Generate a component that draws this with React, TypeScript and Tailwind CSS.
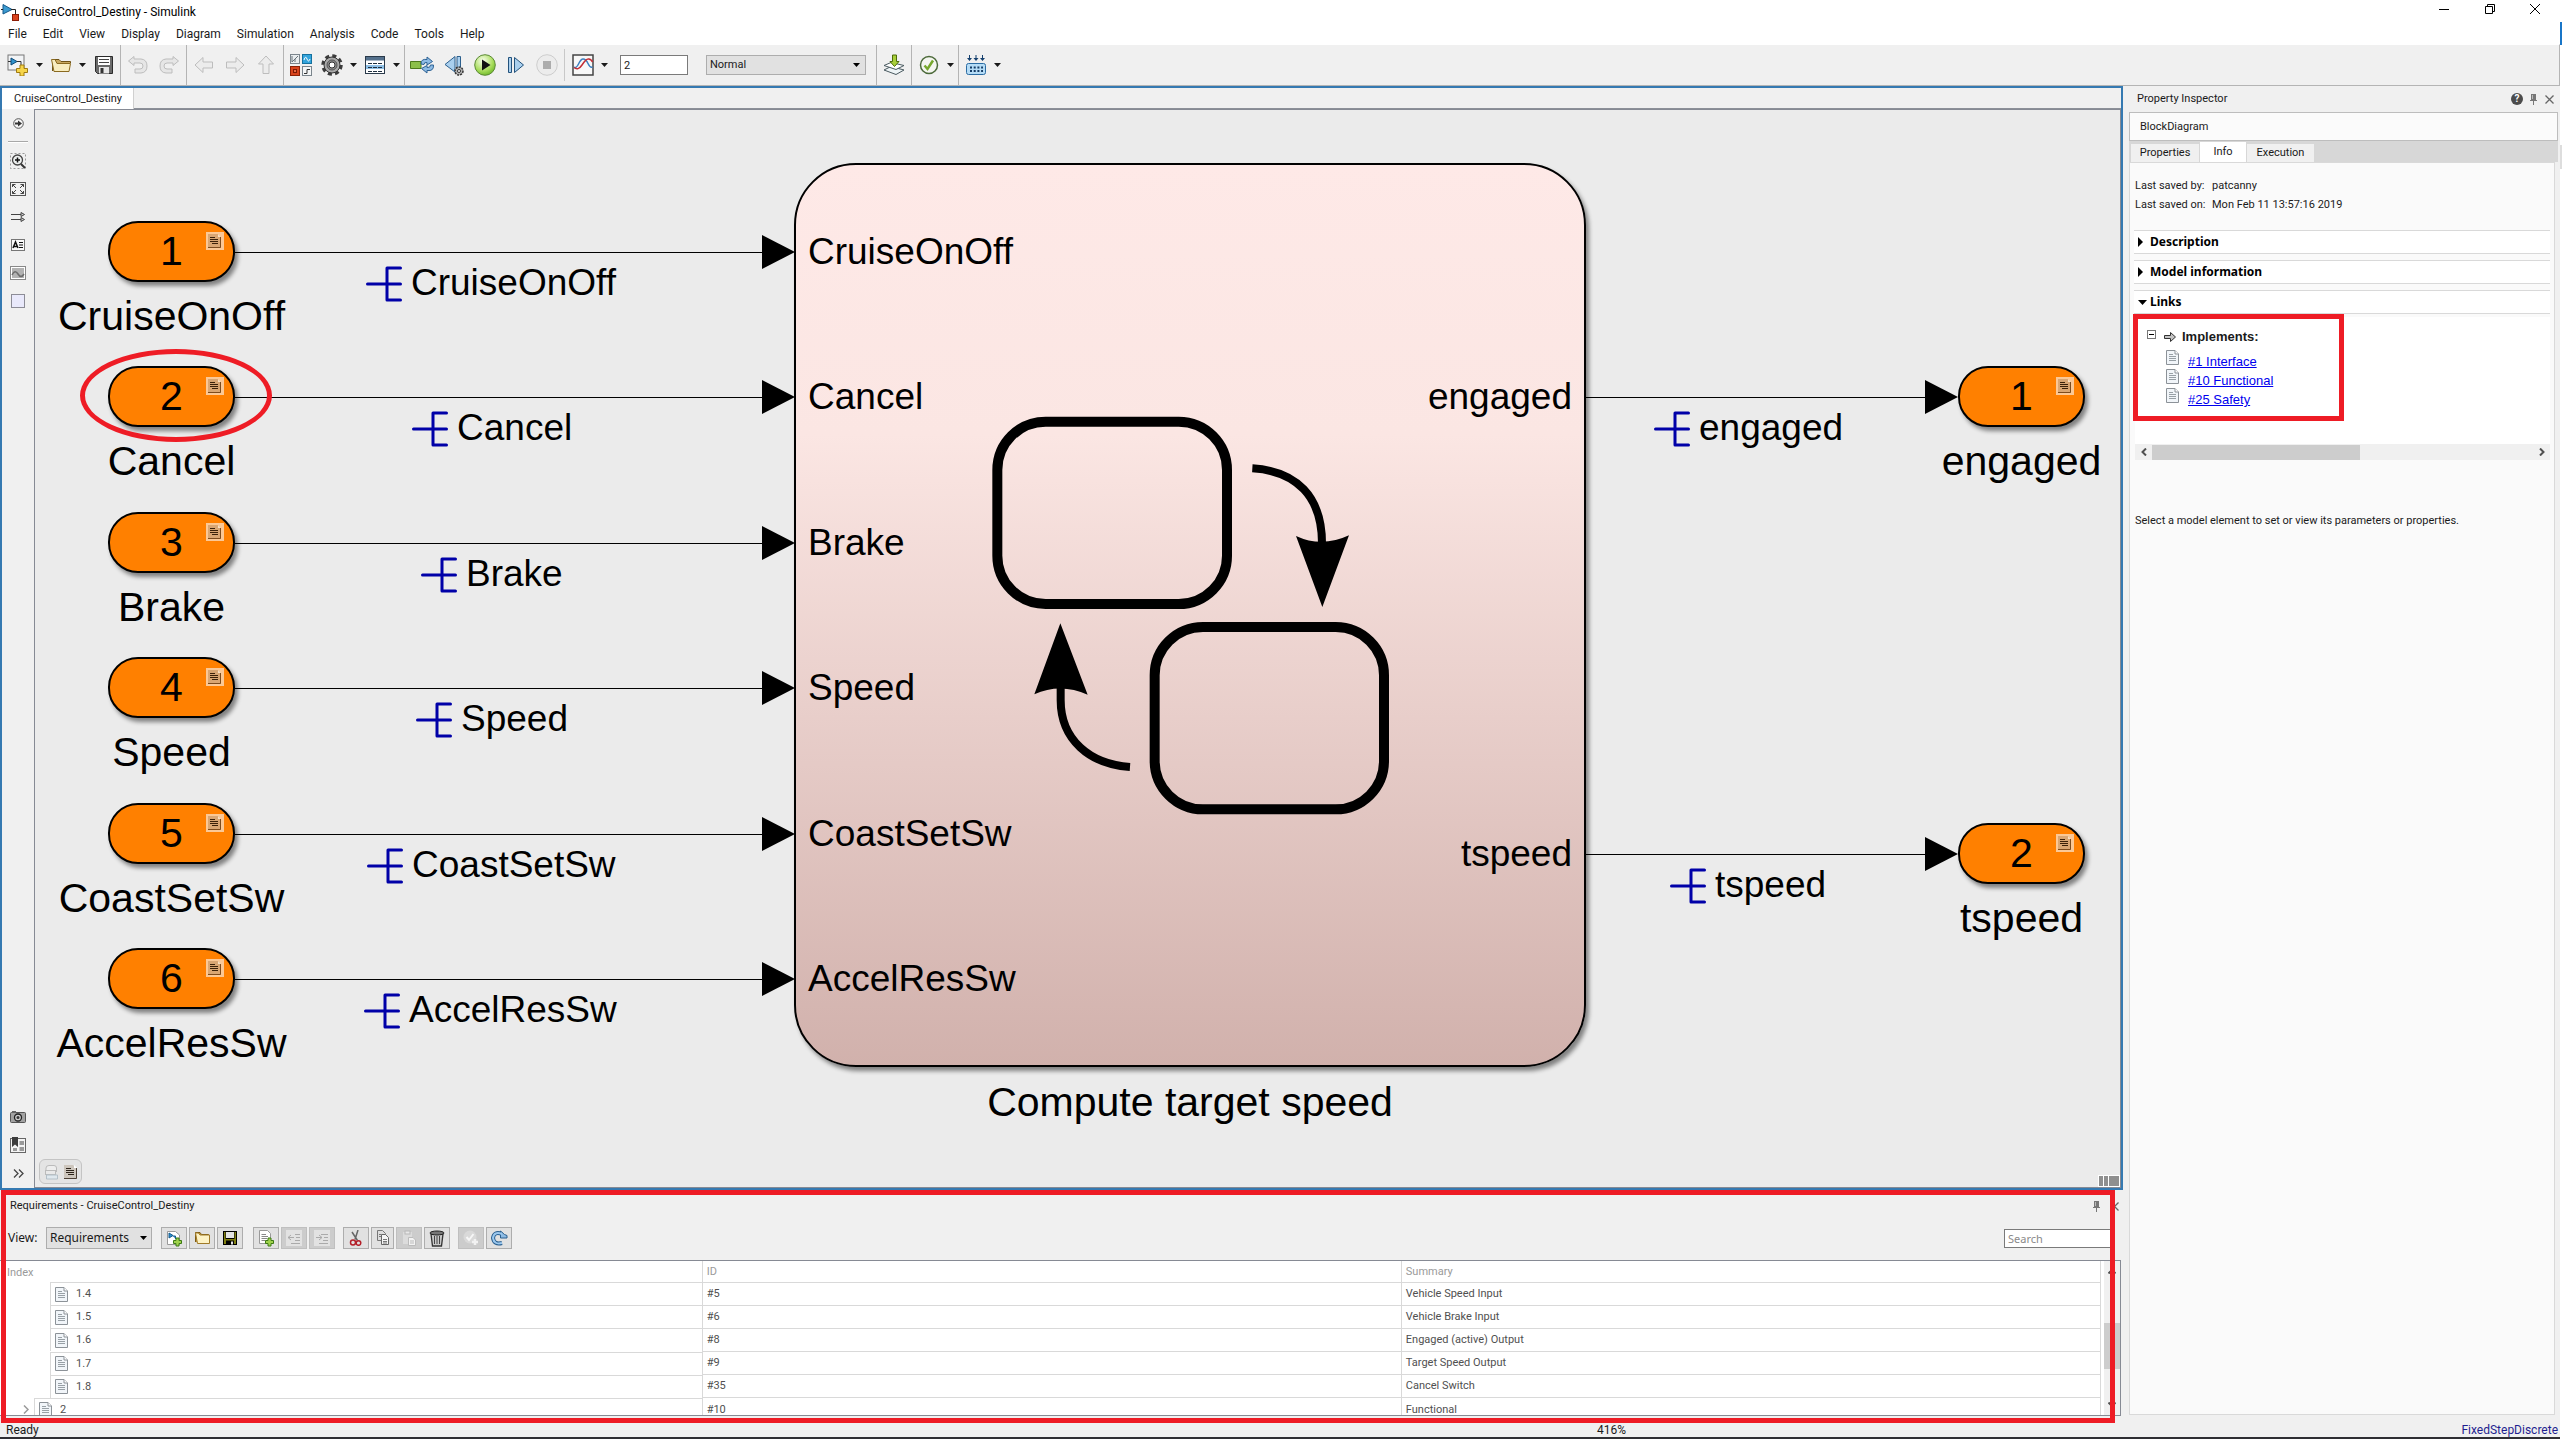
import type { ReactNode } from 'react';

/* ---------- shared icons ---------- */

function Svg({ w = 22, h = 22, box, children }: { w?: number; h?: number; box?: string; children: ReactNode }) {
  return (
    <svg width={w} height={h} viewBox={box ?? `0 0 ${w} ${h}`} className="block shrink-0" aria-hidden="true">
      {children}
    </svg>
  );
}

const Caret = ({ label }: { label: string }) => (
  <button aria-label={label} className="flex h-6 w-[7px] shrink-0 items-center">
    <Svg w={7} h={4}>
      <path d="M0 0H7L3.5 4Z" fill="#1a1a1a" />
    </Svg>
  </button>
);

const Tool = ({ label, children }: { label: string; children: ReactNode }) => (
  <button aria-label={label} className="flex shrink-0 items-center justify-center">
    {children}
  </button>
);

const Group = ({ children }: { children: ReactNode }) => (
  <div className="flex h-full items-center border-r border-[#b4b4b4]">{children}</div>
);

const AppIcon = () => (
  <Svg w={18} h={18}>
    <path d="M2 1.500V11L11 6.500Z" fill="#3b9ad0" stroke="#16598a" />
    <path d="M0 6.500H2M10 6.500H14.500V11" fill="none" stroke="#222" />
    <rect x="11.500" y="11.500" width="6" height="6" fill="#d9431e" stroke="#8c1d06" />
  </Svg>
);

const NewIcon = () => (
  <Svg>
    <rect x="1" y="1" width="16" height="15" fill="#f2f4f6" stroke="#777" />
    <path d="M1 7.500H4" stroke="#333" />
    <path d="M4 4V11L10 7.500Z" fill="#2f93cc" stroke="#0f4a78" />
    <path d="M10 7.500H14V12" fill="none" stroke="#333" />
    <path d="M13 11h4v3.500h3.500v4H17V22h-4v-3.500H9.500v-4H13Z" fill="#f6d54a" stroke="#a07a10" />
  </Svg>
);

const FolderIcon = () => (
  <Svg>
    <path d="M2.500 17V5.500H9L11 7.500H20.500V9" fill="#c9a961" stroke="#6f5316" />
    <path d="M1.500 5.500L4 17.500H19L20.500 9.500H7L5 5.500Z" fill="#f8edc0" stroke="#8a6a20" />
  </Svg>
);

const SaveIcon = () => (
  <Svg>
    <path d="M2.500 2.500H19.500V19.500H4.500L2.500 17.500Z" fill="#6a6a6a" stroke="#2b2b2b" />
    <rect x="5" y="3" width="12" height="8" fill="#fff" />
    <path d="M6 5.500H16M6 8.500H16" stroke="#444" />
    <rect x="6" y="13" width="10" height="6.500" fill="#e8e8e8" />
    <rect x="7.500" y="14" width="3" height="5" fill="#333" />
  </Svg>
);

const UNDO = 'M7 2.500L1.500 7L7 11.500V9H13Q16 9 16 12T13 15H8V19H14Q20 18.500 20 12T14 5H7Z';
const UndoIcon = () => (
  <Svg>
    <path d={UNDO} fill="#e6e6e6" stroke="#bdbdbd" />
  </Svg>
);
const RedoIcon = () => (
  <Svg>
    <path d={UNDO} transform="matrix(-1 0 0 1 22 0)" fill="#e6e6e6" stroke="#bdbdbd" />
  </Svg>
);

const ARROW = 'M2 11L10 3.500V8H19.500V14H10V18.500Z';
const ArrowIcon = ({ turn }: { turn: number }) => (
  <Svg>
    <path d={ARROW} transform={`rotate(${turn} 11 11)`} fill="#ececec" stroke="#bdbdbd" />
  </Svg>
);

const LibraryIcon = () => (
  <Svg>
    <rect x=".5" y=".5" width="9" height="9" fill="#e8ecee" stroke="#7b858c" />
    <path d="M2 8V2M2 8L8 2M5 8V5" stroke="#68737a" fill="none" />
    <rect x="12.500" y=".5" width="9" height="9" fill="#33a4dc" stroke="#14719f" />
    <path d="M14 6Q15.500 1 17 5T20 5" stroke="#fff" fill="none" />
    <rect x=".5" y="12.500" width="9" height="9" fill="#d8431c" stroke="#8c2106" />
    <rect x="3.500" y="15.500" width="3" height="3" fill="#e86a45" stroke="#7a1a04" />
    <rect x="12.500" y="12.500" width="9" height="9" fill="#f4f6f7" stroke="#7b858c" />
    <path d="M14 19.500H17V15.500H20" stroke="#333" fill="none" />
  </Svg>
);

const Gear = ({ s = 22 }: { s?: number }) => (
  <Svg w={s} h={s} box="0 0 22 22">
    <circle cx="11" cy="11" r="9" fill="none" stroke="#3c3c3c" strokeWidth="3.500" strokeDasharray="4 3.070" />
    <circle cx="11" cy="11" r="8" fill="#a9a9a9" stroke="#333" />
    <circle cx="11" cy="11" r="5" fill="#8a8a8a" stroke="#555" />
    <circle cx="11" cy="11" r="3" fill="#fff" stroke="#333" />
  </Svg>
);

const ExplorerIcon = () => (
  <Svg>
    <rect x="1.500" y="2.500" width="19" height="17" fill="#fff" stroke="#2a3a4a" />
    <rect x="2" y="3" width="18" height="3.500" fill="#54708c" />
    <rect x="2" y="11" width="18" height="4" fill="#8fc0e6" />
    <path d="M4 9.500h4m1 0h4m1 0h4M4 13.500h4m1 0h4m1 0h4M4 17.500h4m1 0h4m1 0h4" stroke="#1f2f3f" />
  </Svg>
);

const FastRestartIcon = () => (
  <Svg w={24} h={22}>
    <path d="M.5 7.500H11V14.500H.5Z" fill="#8cc04a" stroke="#4d7a1d" />
    <path d="M11 10Q11 4.500 17 5.500L17 3L22.500 7.500L17 11V8.500Q14 8 14 10.500Z" fill="#8dbbe4" stroke="#2d6294" />
    <path d="M23.500 11Q24 17.500 17 16.500V19L11.500 14.500L17 11.500V13.500Q20.500 14 20.500 11Z" fill="#8dbbe4" stroke="#2d6294" />
  </Svg>
);

const StepBackIcon = () => (
  <Svg>
    <path d="M12 2.500V18L2 10.500Z" fill="#a9cfee" stroke="#2c5f8d" />
    <path d="M14 2.500H17.500V16H14Z" fill="#a9cfee" stroke="#2c5f8d" />
    <circle cx="16" cy="17" r="4" fill="#b0b0b0" stroke="#333" strokeWidth="1.500" strokeDasharray="2 1" />
    <circle cx="16" cy="17" r="1.500" fill="#fff" stroke="#333" />
  </Svg>
);

const RunIcon = () => (
  <Svg>
    <defs>
      <radialGradient id="run" cx=".4" cy=".3" r=".8">
        <stop offset="0" stopColor="#fbfff0" />
        <stop offset=".6" stopColor="#a8dd5c" />
        <stop offset="1" stopColor="#5fae1c" />
      </radialGradient>
    </defs>
    <circle cx="11" cy="11" r="10.300" fill="url(#run)" stroke="#5c8a36" />
    <path d="M8 5.500V16.500L16.500 11Z" fill="#111" />
  </Svg>
);

const StepForwardIcon = () => (
  <Svg>
    <path d="M3.500 3.500H6.500V18.500H3.500Z" fill="#a9cfee" stroke="#23527c" />
    <path d="M9.500 3.500V18.500L18.500 11Z" fill="#a9cfee" stroke="#23527c" />
  </Svg>
);

const StopIcon = () => (
  <Svg>
    <circle cx="11" cy="11" r="10.300" fill="#ececec" stroke="#cdcdcd" />
    <rect x="7" y="7" width="8" height="8" fill="#acacac" />
  </Svg>
);

const ScopeIcon = () => (
  <Svg>
    <rect x="1" y="1" width="20" height="20" fill="#f8f8f8" stroke="#444" strokeWidth="1.500" />
    <path d="M2 13Q4 15 6.500 10T11 5Q14 5 16 9.500T20.500 13" fill="none" stroke="#3b7fc0" strokeWidth="1.500" />
    <path d="M2 13.500Q6 17 10 11T16 5Q19 4.500 20.500 8" fill="none" stroke="#c22d35" strokeWidth="1.500" />
  </Svg>
);

const BuildIcon = () => (
  <Svg>
    <path d="M1 16L8 12.500L21 16L13 20.500Z" fill="#eef4f6" stroke="#4a5a60" />
    <path d="M1 11.500L8 8.500L21 11.500L13 15.500Z" fill="#fff" stroke="#4a5a60" />
    <path d="M9.500 1H13.500V7.500H16L11.500 12.500L7 7.500H9.500Z" fill="#a9cf3a" stroke="#4d6d08" />
  </Svg>
);

const CheckIcon = () => (
  <Svg>
    <circle cx="11" cy="11" r="8.500" fill="#f4f6f0" stroke="#4c6a3a" strokeWidth="1.500" />
    <path d="M6.500 11.500L9.500 15L15 6.500" fill="none" stroke="#76a82c" strokeWidth="2.500" />
  </Svg>
);

const DeployIcon = () => (
  <Svg>
    <path d="M4.500 1V5M11 1V5M17.500 1V5" stroke="#15406e" />
    <path d="M2 4h5L4.500 7ZM8.500 4h5L11 7ZM15 4h5L17.500 7Z" fill="#15406e" />
    <rect x="1.500" y="9.500" width="19" height="11" rx="2" fill="#b5dcf6" stroke="#2b6ca3" />
    <path d="M5 13.500H18M5 17H18" stroke="#143c66" strokeWidth="2" strokeDasharray="2 1.700" />
  </Svg>
);

const PageIcon = () => (
  <Svg w={13} h={15}>
    <path d="M.5 .5H9L12.500 4V14.500H.5Z" fill="#f1f5f9" stroke="#8c9298" />
    <path d="M9 .5V4H12.500" fill="#fff" stroke="#8c9298" />
    <path d="M3 4.500H7M3 6.500H10M3 8.500H10M3 10.500H10" stroke="#98a0a6" />
  </Svg>
);

const PinIcon = () => (
  <Svg w={7} h={11}>
    <rect x="1" y="0" width="5" height="6" fill="#777" />
    <rect x="2" y="1" width="1" height="4" fill="#bbb" />
    <path d="M0 6.500H7M3.500 7V11" stroke="#777" />
  </Svg>
);

const CloseSmall = () => (
  <Svg w={9} h={9}>
    <path d="M.5 .5L8.500 8.500M8.500 .5L.5 8.500" stroke="#666" strokeWidth="1.300" />
  </Svg>
);

/* ---------- model toolbar ---------- */

function Toolbar() {
  return (
    <div role="toolbar" className="flex h-[42px] shrink-0 items-center border-t border-b border-r border-t-white border-b-[#b4b4b4] border-r-[#b4b4b4] bg-[#f0f0f0]">
      <Group>
        <div className="flex items-center gap-[7px] pr-[5px] pl-[7px]">
          <Tool label="New model"><NewIcon /></Tool>
          <Caret label="New options" />
          <Tool label="Open"><FolderIcon /></Tool>
          <Caret label="Open options" />
          <Tool label="Save"><SaveIcon /></Tool>
        </div>
      </Group>
      <Group>
        <div className="flex items-center gap-[9px] px-1.5">
          <Tool label="Undo"><UndoIcon /></Tool>
          <Tool label="Redo"><RedoIcon /></Tool>
        </div>
      </Group>
      <Group>
        <div className="flex items-center gap-[9px] px-1.5">
          <Tool label="Back"><ArrowIcon turn={0} /></Tool>
          <Tool label="Forward"><ArrowIcon turn={180} /></Tool>
          <Tool label="Up to parent"><ArrowIcon turn={90} /></Tool>
        </div>
      </Group>
      <Group>
        <div className="flex items-center gap-[7px] pr-1 pl-1.5">
          <Tool label="Library browser"><LibraryIcon /></Tool>
          <div className="ml-0.5"><Tool label="Model configuration"><Gear /></Tool></div>
          <Caret label="Configuration options" />
          <Tool label="Model explorer"><ExplorerIcon /></Tool>
          <Caret label="Explorer options" />
        </div>
      </Group>
      <Group>
        <div className="flex items-center gap-[9px] pr-1.5 pl-[5px]">
          <Tool label="Fast restart"><FastRestartIcon /></Tool>
          <Tool label="Step back"><StepBackIcon /></Tool>
          <Tool label="Run"><RunIcon /></Tool>
          <Tool label="Step forward"><StepForwardIcon /></Tool>
          <Tool label="Stop"><StopIcon /></Tool>
        </div>
        <div className="mr-[7px] h-8 w-px bg-[#c8c8c8]" />
        <div className="flex items-center gap-[7px]">
          <Tool label="Simulation data inspector"><ScopeIcon /></Tool>
          <Caret label="Data inspector options" />
        </div>
        <input aria-label="Stop time" defaultValue="2" className="ml-3 h-5 w-[68px] border border-[#7a7a7a] bg-white px-[3px] text-[11px]" />
        <div className="relative mr-[10px] ml-[18px]">
          <select aria-label="Simulation mode" className="block h-5 w-[160px] appearance-none border border-[#adadad] bg-[#e1e1e1] px-[3px] text-[11px]">
            <option>Normal</option>
          </select>
          <div className="pointer-events-none absolute top-2 right-1.5">
            <Svg w={7} h={4}><path d="M0 0H7L3.500 4Z" fill="#000" /></Svg>
          </div>
        </div>
      </Group>
      <Group>
        <div className="px-1.5"><Tool label="Build model"><BuildIcon /></Tool></div>
      </Group>
      <Group>
        <div className="flex items-center gap-[7px] pr-1 pl-1.5">
          <Tool label="Model advisor"><CheckIcon /></Tool>
          <Caret label="Advisor options" />
        </div>
      </Group>
      <div className="flex items-center gap-[7px] pl-1.5">
        <Tool label="Deploy to hardware"><DeployIcon /></Tool>
        <Caret label="Deploy options" />
      </div>
    </div>
  );
}

/* ---------- diagram ---------- */

type Port = { n: number; name: string; y: number; labelX: number };

const inputs: Port[] = [
  { n: 1, name: 'CruiseOnOff', y: 142, labelX: 331 },
  { n: 2, name: 'Cancel', y: 287, labelX: 377 },
  { n: 3, name: 'Brake', y: 433, labelX: 386 },
  { n: 4, name: 'Speed', y: 578, labelX: 381 },
  { n: 5, name: 'CoastSetSw', y: 724, labelX: 332 },
  { n: 6, name: 'AccelResSw', y: 869, labelX: 329 },
];

const outputs: Port[] = [
  { n: 1, name: 'engaged', y: 287, labelX: 1619 },
  { n: 2, name: 'tspeed', y: 744, labelX: 1635 },
];

function ReqBadge() {
  return (
    <Svg w={18} h={18}>
      <rect width="18" height="18" fill="#fbc896" />
      <path d="M2 2H12L15 5V16H2Z" fill="#d9a673" />
      <path d="M14.500 5V15.500H2" fill="none" stroke="#7d4c1e" />
      <path d="M4 5.500H9M4 7.500H12M4 9.500H12M6 11.500H12" stroke="#3c220a" />
      <path d="M12 2V5H15Z" fill="#f8e0c4" />
    </Svg>
  );
}

function PortBlock({ port, x }: { port: Port; x: number }) {
  return (
    <div className="absolute" style={{ left: x, top: port.y - 31 }}>
      <div className="relative flex h-[61px] w-[127px] items-center justify-center rounded-[30px] border-[2px] border-black bg-[#ff8000] text-[41px] leading-none shadow-[3px_4px_4px_rgba(0,0,0,0.45)]">
        {port.n}
        <div className="absolute top-[9px] right-[9px]"><ReqBadge /></div>
      </div>
      <div className="mt-2.5 flex w-[127px] justify-center text-[41px] leading-[48px] whitespace-nowrap">{port.name}</div>
    </div>
  );
}

function SignalLabel({ port }: { port: Port }) {
  return (
    <div className="absolute flex items-end gap-[9px] text-[37px] leading-10 whitespace-nowrap" style={{ left: port.labelX, top: port.y + 11 }}>
      <div className="mb-px">
        <Svg w={36} h={36}>
          <path d="M1.500 18H34.500M34.500 2H21V34H34.500" fill="none" stroke="#0000a8" strokeWidth="3" strokeLinecap="round" strokeLinejoin="round" />
        </Svg>
      </div>
      {port.name}
    </div>
  );
}

function Wire({ x, y, w }: { x: number; y: number; w: number }) {
  return (
    <div className="absolute flex items-center" style={{ left: x, top: y - 17, width: w }}>
      <div className="h-px flex-1 bg-black" />
      <Svg w={33} h={34}><path d="M0 0V34L33 17Z" fill="#000" /></Svg>
    </div>
  );
}

function ChartGlyph() {
  return (
    <Svg w={460} h={450} box="0 0 1380 1350">
      <g fill="none" stroke="#000">
        <rect x="112" y="95" width="689" height="547" rx="145" strokeWidth="30" />
        <rect x="584" y="711" width="688" height="547" rx="145" strokeWidth="30" />
        <path d="M877 235C1010 243 1086 320 1086 460" strokeWidth="24" />
        <path d="M510 1131C390 1123 302 1050 302 930V890" strokeWidth="24" />
      </g>
      <path d="M1008 438Q1086 474 1167 436L1087 651Z" />
      <path d="M301 700L383 914Q301 878 223 913Z" />
    </Svg>
  );
}

function Diagram() {
  return (
    <div className="relative flex-1 overflow-hidden bg-[#ebebeb] font-['Liberation_Sans',Arial,sans-serif] text-black">
      {inputs.map((p) => <Wire key={p.n} x={200} y={p.y} w={560} />)}
      {outputs.map((p) => <Wire key={p.n} x={1551} y={p.y} w={372} />)}

      <div className="absolute top-[53px] left-[759px] h-[904px] w-[792px] rounded-[62px] border-[2px] border-black bg-linear-to-b from-[#fee9e7] via-[#fbe6e3] via-30% to-[#d1b1ac] shadow-[3px_4px_4px_rgba(0,0,0,0.45)]" />
      <div className="absolute top-[968px] left-[759px] w-[792px] text-center text-[41px] leading-[48px]">Compute target speed</div>
      <div className="absolute top-[280px] left-[925px]"><ChartGlyph /></div>

      {inputs.map((p) => (
        <div key={p.name} className="absolute left-[773px] text-[37px] leading-10" style={{ top: p.y - 20 }}>{p.name}</div>
      ))}
      {outputs.map((p) => (
        <div key={p.name} className="absolute left-[1337px] w-[200px] text-right text-[37px] leading-10" style={{ top: p.y - 20 }}>{p.name}</div>
      ))}

      {inputs.map((p) => <PortBlock key={p.name} port={p} x={73} />)}
      {outputs.map((p) => <PortBlock key={p.name} port={p} x={1923} />)}
      {[...inputs, ...outputs].map((p) => <SignalLabel key={p.name} port={p} />)}

      <div className="absolute top-[239px] left-[45px] h-[93px] w-[192px] rounded-[50%] border-[5px] border-[#ee1c25]" />

      <div className="absolute bottom-[3px] left-1 flex h-[25px] w-[43px] items-center justify-center gap-1 rounded-md border border-[#c4c4c4] bg-[#e4e4e4]">
        <button aria-label="Model lock">
          <Svg w={15} h={16}>
            <path d="M2 8V4Q2 1.500 5 1.500H10Q12.500 1.500 12.500 4V8" fill="#eee" stroke="#bbb" />
            <rect x="1.500" y="6.500" width="10" height="4" fill="#e9e9e9" stroke="#bbb" />
            <path d="M2.500 15V11H13.500V15Z" fill="#dfe8ee" stroke="#b4c0c8" />
          </Svg>
        </button>
        <button aria-label="Requirements view">
          <Svg w={15} h={16}>
            <path d="M1 1H10L14 5V15H1Z" fill="#cdc6bd" />
            <path d="M13.500 4V14.500H1" fill="none" stroke="#4c4036" />
            <path d="M3 4.500H8M3 6.500H11M3 8.500H11M5 10.500H11" stroke="#2d241b" />
            <path d="M11 1V4H14Z" fill="#fff" />
          </Svg>
        </button>
      </div>
      <div className="absolute right-0 bottom-0 flex h-3 gap-px border border-white bg-white">
        <div className="w-1 bg-[#8f8f8f]" />
        <div className="w-1 bg-[#8f8f8f]" />
        <div className="w-2.5 bg-[#8f8f8f]" />
      </div>
    </div>
  );
}

/* ---------- palette on the canvas' left ---------- */

const Cell = ({ label, children }: { label: string; children: ReactNode }) => (
  <button aria-label={label} className="flex h-7 w-full items-center justify-center">{children}</button>
);

function Palette() {
  return (
    <div className="flex w-8 shrink-0 flex-col bg-[#f0f0f0] pb-px">
      <Cell label="Hide browser">
        <Svg w={11} h={11}>
          <circle cx="5.500" cy="5.500" r="4.800" fill="#f6f6f6" stroke="#555" />
          <path d="M2 4.500H5V2.500L9 5.500L5 8.500V6.500H2Z" fill="#333" />
        </Svg>
      </Cell>
      <div className="mx-1.5 my-1 h-0.5 border-t border-[#a8a8a8] bg-white" />
      <Cell label="Zoom">
        <Svg w={16} h={16}>
          <rect x=".5" y=".5" width="15" height="15" fill="none" stroke="#999" strokeDasharray="2 2" />
          <circle cx="7.500" cy="7" r="5" fill="#eef1f0" stroke="#444" strokeWidth="1.300" />
          <path d="M5 7H10M7.500 4.500V9.500" stroke="#111" strokeWidth="1.500" />
          <path d="M11 11L15 15" stroke="#333" strokeWidth="2" />
        </Svg>
      </Cell>
      <Cell label="Fit to view">
        <Svg w={16} h={14}>
          <rect x=".5" y=".5" width="15" height="13" fill="#f2f2f2" stroke="#555" />
          <path d="M2.500 5V2.500H5.500M10.500 2.500H13.500V5M13.500 9V11.500H10.500M5.500 11.500H2.500V9" stroke="#444" fill="none" />
          <path d="M2.500 2.500L6 6M13.500 2.500L10 6M2.500 11.500L6 8M13.500 11.500L10 8" stroke="#444" />
        </Svg>
      </Cell>
      <Cell label="Sample time">
        <Svg w={15} h={10}>
          <path d="M0 2.500H12M0 7.500H12" stroke="#444" />
          <path d="M10 .5L13.500 2.500L10 4.500ZM10 5.500L13.500 7.500L10 9.500Z" fill="#ccc" stroke="#444" />
        </Svg>
      </Cell>
      <Cell label="Annotation">
        <Svg w={14} h={12}>
          <rect x=".5" y=".5" width="13" height="11" fill="#fafafa" stroke="#777" />
          <path d="M2 9L4.500 3L7 9M3 7.500H6" stroke="#111" strokeWidth="1.500" fill="none" />
          <path d="M8 3.500H12M8 6H12M8 8.500H12" stroke="#111" />
        </Svg>
      </Cell>
      <Cell label="Image">
        <Svg w={16} h={14}>
          <rect x=".5" y=".5" width="15" height="13" fill="#fff" stroke="#888" />
          <rect x="2" y="2" width="12" height="10" fill="#b2b2b2" />
          <path d="M2 9Q5 3 8 8T14 8" stroke="#6c6c6c" fill="none" strokeWidth="1.500" />
        </Svg>
      </Cell>
      <Cell label="Area">
        <Svg w={14} h={14}><rect x=".5" y=".5" width="13" height="13" fill="#e9e9fb" stroke="#8c8c96" /></Svg>
      </Cell>
      <div className="flex-1" />
      <Cell label="Screenshot">
        <Svg w={16} h={12}>
          <rect x=".5" y="1.500" width="15" height="10" rx="1" fill="#a2a2a2" stroke="#555" />
          <rect x="2" y="0" width="4" height="2" fill="#666" />
          <circle cx="8" cy="6.500" r="3.500" fill="#ccc" stroke="#222" strokeWidth="1.300" />
          <circle cx="8" cy="6.500" r="1.500" fill="#333" />
        </Svg>
      </Cell>
      <Cell label="Viewmarks">
        <Svg w={16} h={16}>
          <rect x=".5" y="1.500" width="15" height="14" fill="#f4f4f4" stroke="#666" />
          <path d="M2 0H8V10L5 7.500L2 10Z" fill="#3c3c3c" />
          <path d="M9.500 4H14V8H9.500ZM9.500 10H14V14H9.500ZM3 11H7V14H3Z" fill="#9a9a9a" />
        </Svg>
      </Cell>
      <Cell label="More">
        <Svg w={11} h={9}>
          <path d="M1 .5L5 4.500L1 8.500M6 .5L10 4.500L6 8.500" fill="none" stroke="#444" strokeWidth="1.300" />
        </Svg>
      </Cell>
    </div>
  );
}

function Editor() {
  return (
    <section className="flex min-h-0 flex-1 flex-col border-2 border-[#3579b1] bg-[#f0f0f0]">
      <div className="flex h-[21px] shrink-0">
        <button className="flex w-[132px] items-center border-r border-[#d0d0d0] bg-white pt-0.5 pl-3 text-[11px]">CruiseControl_Destiny</button>
        <div className="flex-1 border-b border-[#8c9098]" />
      </div>
      <div className="flex min-h-0 flex-1">
        <Palette />
        <div className="flex flex-1 border border-[#868a94]"><Diagram /></div>
      </div>
    </section>
  );
}

/* ---------- requirements dock ---------- */

const reqRows = [
  { index: '1.4', id: '#5', summary: 'Vehicle Speed Input', child: true },
  { index: '1.5', id: '#6', summary: 'Vehicle Brake Input', child: true },
  { index: '1.6', id: '#8', summary: 'Engaged (active) Output', child: true },
  { index: '1.7', id: '#9', summary: 'Target Speed Output', child: true },
  { index: '1.8', id: '#35', summary: 'Cancel Switch', child: true },
  { index: '2', id: '#10', summary: 'Functional', child: false },
];

const ReqButton = ({ label, off, children }: { label: string; off?: boolean; children: ReactNode }) => (
  <button
    aria-label={label}
    disabled={off}
    className="flex h-[22px] w-[26px] items-center justify-center border border-[#adadad] bg-[#e1e1e1] disabled:border-[#bfbfbf] disabled:bg-[#cccccc]"
  >
    {children}
  </button>
);

const Plus = () => <path d="M10 9h3v2.500h2.500v3H13V17h-3v-2.500H7.500v-3H10Z" fill="#9fd24c" stroke="#3c7a14" />;

function RequirementsToolbar() {
  return (
    <div className="flex items-center pl-2 font-['Noto_Sans',sans-serif]">
      <label htmlFor="req-view" className="w-[38px] text-[12px]">View:</label>
      <div className="relative mr-[9px]">
        <select id="req-view" className="block h-[22px] w-[106px] appearance-none border border-[#adadad] bg-[#e1e1e1] pl-[3px] text-[12px]">
          <option>Requirements</option>
        </select>
        <div className="pointer-events-none absolute top-[9px] right-[5px]">
          <Svg w={7} h={4}><path d="M0 0H7L3.500 4Z" fill="#000" /></Svg>
        </div>
      </div>
      <div className="mr-2.5 flex gap-0.5">
        <ReqButton label="New requirement set">
          <Svg w={16} h={18}>
            <path d="M1.500 2.500H9.500L13.500 6V15.500H1.500Z" fill="#fff" stroke="#999" />
            <path d="M3 4V9L7 6.500ZM7 7H9.500V10" fill="#2f93cc" stroke="#14598c" />
            <Plus />
          </Svg>
        </ReqButton>
        <ReqButton label="Open requirement set">
          <Svg w={18} h={16}>
            <path d="M2.500 12V2.500H7L8.500 4.500H15.500V12" fill="#c49a3c" stroke="#7c5a14" />
            <path d="M2.500 3L4.500 13.500H16.500V5H7L5.500 3Z" fill="#fdf2c4" stroke="#a07a28" />
          </Svg>
        </ReqButton>
        <ReqButton label="Save requirement set">
          <Svg w={14} h={14}>
            <rect width="14" height="14" fill="#000" />
            <rect x="3" y="1" width="8" height="6" fill="#e4e4e4" />
            <path d="M1 1H2.500V8H11.500V1H13V13H11V9.500H3V13H1Z" fill="#7f7f10" />
            <rect x="8" y="10.500" width="2" height="3" fill="#e4e4e4" />
          </Svg>
        </ReqButton>
      </div>
      <div className="mr-2 flex gap-0.5">
        <ReqButton label="Add requirement">
          <Svg w={16} h={18}>
            <path d="M1.500 1.500H9.500L12.500 4.500V14.500H1.500Z" fill="#fff" stroke="#999" />
            <path d="M3.500 5.500H8M3.500 7.500H10M3.500 9.500H9M3.500 11.500H7" stroke="#888" />
            <Plus />
          </Svg>
        </ReqButton>
        <ReqButton label="Promote requirement" off>
          <Svg w={16} h={16}>
            <rect width="16" height="16" fill="#e2e2e2" />
            <path d="M2 7.500H8M2 7.500L5 5M2 7.500L5 10M9 4.500H14M10 7.500H14M9 10.500H14M5 13.500H14" stroke="#aaa" fill="none" />
          </Svg>
        </ReqButton>
        <ReqButton label="Demote requirement" off>
          <Svg w={16} h={16}>
            <rect width="16" height="16" fill="#e2e2e2" />
            <path d="M2 7.500H8M8 7.500L5 5M8 7.500L5 10M7 4.500H14M10 7.500H14M9 10.500H14M5 13.500H14" stroke="#aaa" fill="none" />
          </Svg>
        </ReqButton>
      </div>
      <div className="mr-2 flex gap-0.5">
        <ReqButton label="Cut">
          <Svg w={14} h={16}>
            <path d="M9 0L6 9.500M3 2L8.500 10.500" stroke="#666" strokeWidth="1.500" />
            <circle cx="4" cy="12.500" r="2.500" fill="none" stroke="#b4202a" strokeWidth="1.500" />
            <circle cx="9.500" cy="13" r="2.300" fill="none" stroke="#b4202a" strokeWidth="1.500" />
          </Svg>
        </ReqButton>
        <button aria-label="Copy" className="flex h-[22px] w-[23px] items-center justify-center border border-[#adadad] bg-[#e1e1e1]">
          <Svg w={14} h={16}>
            <path d="M1.500 .5H6.500L9.500 3.500V10.500H1.500Z" fill="#ddd" stroke="#777" />
            <path d="M5.500 4.500H9.500L12.500 7.500V14.500H5.500Z" fill="#f4f4f4" stroke="#666" />
            <path d="M7 9.500H11M7 11.500H11M7 13H11M3 4.500H5M3 6.500H5" stroke="#777" />
          </Svg>
        </button>
        <ReqButton label="Paste" off>
          <Svg w={16} h={16}>
            <rect x="2" y="2" width="9" height="12" fill="#dcdcdc" />
            <rect x="4" y="1" width="5" height="3" fill="#e8e8e8" stroke="#b8b8b8" />
            <path d="M7.500 7.500H12L14.500 10V15.500H7.500Z" fill="#f2f2f2" stroke="#bbb" />
            <path d="M9 11H13M9 13H13" stroke="#bbb" />
          </Svg>
        </ReqButton>
        <ReqButton label="Delete">
          <Svg w={16} h={17}>
            <path d="M2 4H14L12.500 16H3.500Z" fill="#c8c8c8" stroke="#333" strokeWidth="1.300" />
            <path d="M5.500 6V14M8 6V14M10.500 6V14" stroke="#444" />
            <ellipse cx="8" cy="3" rx="7" ry="2" fill="#777" stroke="#222" />
          </Svg>
        </ReqButton>
      </div>
      <div className="flex gap-0.5">
        <ReqButton label="Verify" off>
          <Svg w={16} h={16}>
            <circle cx="7" cy="7" r="6.500" fill="#d9d9d9" />
            <path d="M3.500 7L6 10L10.500 4" stroke="#f6f6f6" strokeWidth="2" fill="none" />
            <path d="M12 9V15M9 12H15" stroke="#f2f2f2" strokeWidth="2.500" />
          </Svg>
        </ReqButton>
        <ReqButton label="Refresh">
          <Svg w={18} h={16}>
            <path d="M12 4Q4 1 3 8Q4 15 12 13" fill="none" stroke="#2a5f8f" strokeWidth="4" />
            <path d="M10.500 1V8H17V5.500L14.500 4.500Z" fill="#8dbbe4" stroke="#2a5f8f" />
            <path d="M12 4Q4 1 3 8Q4 15 12 13" fill="none" stroke="#9cc8ee" strokeWidth="2" />
          </Svg>
        </ReqButton>
      </div>
      <div className="flex-1" />
      <input aria-label="Search" placeholder="Search" className="mr-[9px] h-[19px] w-[110px] border border-[#7a7a7a] bg-white px-[3px] text-[11px] placeholder:text-[#8a8a8a]" />
    </div>
  );
}

function Requirements() {
  return (
    <section className="relative flex h-[233px] shrink-0 flex-col bg-[#f0f0f0]">
      <div className="mb-2.5 flex h-[27px] items-center pt-1.5 pr-1">
        <h2 className="flex-1 pl-2.5 text-[11px]">Requirements - CruiseControl_Destiny</h2>
        <div className="flex items-center gap-2.5">
          <button aria-label="Pin panel"><PinIcon /></button>
          <button aria-label="Close panel"><CloseSmall /></button>
        </div>
      </div>
      <RequirementsToolbar />
      <div className="mt-[11px] mr-0.5 mb-[7px] flex min-h-0 flex-1 overflow-hidden border border-l-0 border-[#868a94] bg-white pl-[3px]">
        <table className="mr-[3px] h-[160px] flex-1 table-fixed border-collapse self-start text-[11px] leading-4 text-[#505050]">
          <thead>
            <tr className="h-[21px] text-left text-[#9a9a9a]">
              <th className="w-1/3 border-r border-[#d9d9d9] pt-0.5 pl-1 font-normal">Index</th>
              <th className="w-1/3 border-r border-[#d9d9d9] pt-0.5 pl-1 font-normal">ID</th>
              <th className="w-1/3 border-r border-[#d9d9d9] pt-0.5 pl-1 font-normal">Summary</th>
            </tr>
          </thead>
          <tbody>
            {reqRows.map((r) => (
              <tr key={r.index} className="h-[23px]">
                <td className="border-r border-[#d9d9d9] p-0">
                  {r.child ? (
                    <div className="ml-[47px] flex h-[23px] items-center gap-2 border-t border-l border-[#d9d9d9] pl-1">
                      <PageIcon />
                      {r.index}
                    </div>
                  ) : (
                    <div className="flex h-[23px]">
                      <button aria-label="Expand" className="flex w-[31px] items-center justify-end pr-[5px]">
                        <Svg w={6} h={9}><path d="M1 .5L5 4.500L1 8.500" fill="none" stroke="#999" strokeWidth="1.500" /></Svg>
                      </button>
                      <div className="flex flex-1 items-center gap-2 border-t border-l border-[#d9d9d9] pl-1">
                        <PageIcon />
                        {r.index}
                      </div>
                    </div>
                  )}
                </td>
                <td className="border-t border-r border-[#d9d9d9] py-0 pl-1">{r.id}</td>
                <td className="border-t border-r border-[#d9d9d9] py-0 pl-1">{r.summary}</td>
              </tr>
            ))}
          </tbody>
        </table>
        <div className="flex w-4 flex-col items-center justify-between bg-[#f0f0f0] py-2">
          <Svg w={8} h={5}><path d="M.5 4.500L4 1L7.500 4.500" fill="none" stroke="#505050" strokeWidth="2" /></Svg>
          <div className="mt-4 h-[46px] w-full bg-[#cdcdcd]" />
          <Svg w={8} h={5}><path d="M.5 .5L4 4L7.500 .5" fill="none" stroke="#505050" strokeWidth="2" /></Svg>
        </div>
      </div>
      <div className="pointer-events-none absolute inset-y-0 right-2 left-px border-[5px] border-[#ee1c25]" />
    </section>
  );
}

/* ---------- property inspector ---------- */

const Section = ({ title, open }: { title: string; open?: boolean }) => (
  <button className="mx-1 mb-1.5 flex h-6 items-center border-y border-[#d9d9d9] bg-white font-['Noto_Sans',sans-serif] text-[12px] font-bold text-black" aria-expanded={!!open}>
    <span className="flex w-4 justify-start pl-1">
      {open ? (
        <Svg w={9} h={5}><path d="M0 0H9L4.500 5Z" /></Svg>
      ) : (
        <Svg w={5} h={10}><path d="M0 0V10L5 5Z" /></Svg>
      )}
    </span>
    {title}
  </button>
);

function Inspector() {
  const links = ['#1 Interface', '#10 Functional', '#25 Safety'];
  return (
    <aside className="mb-2 flex w-[437px] shrink-0 flex-col bg-[#f0f0f0] pl-1.5 text-[11px]">
      <div className="flex h-[26px] items-center pl-2">
        <h2 className="flex-1">Property Inspector</h2>
        <div className="flex items-center gap-[7px] pr-1.5">
          <button aria-label="Help" className="flex h-3 w-3 items-center justify-center rounded-full bg-[#4c4c4c] text-[10px] leading-none font-bold text-white">?</button>
          <button aria-label="Pin inspector"><PinIcon /></button>
          <button aria-label="Close inspector" className="ml-px"><CloseSmall /></button>
        </div>
      </div>
      <div className="mr-0.5 flex h-[29px] shrink-0 items-center border border-[#bdbdbd] bg-[#fbfbfb] pt-0.5 pl-2.5">BlockDiagram</div>
      <div role="tablist" className="mr-0.5 flex h-[21px] shrink-0 items-end bg-[#d7d7d7] pl-0.5">
        <button role="tab" className="h-[18px] w-[69px] border-r border-[#d7d7d7] bg-[#f0f0f0] pt-px">Properties</button>
        <button role="tab" aria-selected="true" className="h-5 w-[46px] bg-white">Info</button>
        <button role="tab" className="ml-px h-[18px] w-[67px] bg-[#f0f0f0] pt-px">Execution</button>
      </div>
      <div className="mr-[5px] flex flex-1 flex-col border border-[#d9d9d9] bg-[#fafafa] pt-[13px]">
        <dl className="mb-4 grid grid-cols-[77px_1fr] pl-[5px] leading-[19px]">
          <dt>Last saved by:</dt>
          <dd>patcanny</dd>
          <dt>Last saved on:</dt>
          <dd>Mon Feb 11 13:57:16 2019</dd>
        </dl>
        <Section title="Description" />
        <Section title="Model information" />
        <Section title="Links" open />
        <div className="relative -mt-[3px] mr-1 ml-[5px] flex h-[127px] flex-col bg-white pt-2.5 pl-3 font-['Liberation_Sans',Arial,sans-serif] text-[13px] leading-[19px]">
          <div className="mb-1.5 flex items-center font-bold">
            <button aria-label="Collapse" className="mr-2 -mt-1">
              <Svg w={9} h={9}>
                <rect x=".5" y=".5" width="8" height="8" fill="#fff" stroke="#777" />
                <path d="M2 4.500H7" stroke="#000" />
              </Svg>
            </button>
            <Svg w={12} h={10}>
              <path d="M.5 3.500H6.500V.5L11.500 5L6.500 9.500V6.500H.5Z" fill="#c4c4c4" stroke="#333" />
            </Svg>
            <span className="ml-1.5">Implements:</span>
          </div>
          {links.map((l) => (
            <div key={l} className="flex items-start gap-[9px] pl-[19px]">
              <div className="-mt-0.5"><PageIcon /></div>
              <a href="#" className="text-[#0000ee] underline">{l}</a>
            </div>
          ))}
          <div className="pointer-events-none absolute -top-[3px] -left-0.5 h-[107px] w-[211px] border-[5px] border-[#ee1c25]" />
        </div>
        <div className="mr-1 ml-[5px] flex h-4 items-center bg-[#f0f0f0]">
          <div className="flex w-[17px] justify-center">
            <Svg w={6} h={8}><path d="M5 .5L1.500 4L5 7.500" fill="none" stroke="#505050" strokeWidth="2" /></Svg>
          </div>
          <div className="h-[15px] w-1/2 bg-[#cdcdcd]" />
          <div className="flex-1" />
          <div className="flex w-[17px] justify-center">
            <Svg w={6} h={8}><path d="M1 .5L4.500 4L1 7.500" fill="none" stroke="#505050" strokeWidth="2" /></Svg>
          </div>
        </div>
        <p className="mt-[53px] pl-[5px]">Select a model element to set or view its parameters or properties.</p>
      </div>
    </aside>
  );
}

/* ---------- window ---------- */

const menus = ['File', 'Edit', 'View', 'Display', 'Diagram', 'Simulation', 'Analysis', 'Code', 'Tools', 'Help'];

export default function App() {
  return (
    <div className="flex h-screen overflow-hidden bg-white font-['Roboto','Noto_Sans',sans-serif] text-[#1a1a1a]">
      <div className="flex min-w-0 flex-1 flex-col">
        <header className="flex h-6 shrink-0 items-center pr-0.5 pl-px">
          <AppIcon />
          <h1 className="ml-1 flex-1 text-[12px] text-black">CruiseControl_Destiny - Simulink</h1>
          <div className="flex h-full items-start">
            <button aria-label="Minimize" className="flex h-[18px] w-[46px] items-center justify-center"><Svg w={10} h={1}><rect width="10" height="1" /></Svg></button>
            <button aria-label="Restore" className="flex h-[18px] w-[45px] items-center justify-center">
              <Svg w={10} h={10}><path d="M.5 2.500H7.500V9.500H.5ZM2.500 2.500V.5H9.500V7.500H7.500" fill="none" stroke="#000" /></Svg>
            </button>
            <button aria-label="Close" className="flex h-[18px] w-[46px] items-center justify-center">
              <Svg w={10} h={10}><path d="M0 0L10 10M10 0L0 10" stroke="#000" /></Svg>
            </button>
          </div>
        </header>
        <nav className="flex h-5 shrink-0 items-center gap-4 pl-2 text-[12px]">
          {menus.map((m) => <button key={m}>{m}</button>)}
        </nav>
        <Toolbar />
        <div className="flex min-h-0 flex-1 bg-[#f0f0f0]">
          <main className="flex min-w-0 flex-1 flex-col">
            <Editor />
            <Requirements />
          </main>
          <Inspector />
        </div>
        <footer className="grid h-[16px] shrink-0 grid-cols-[1fr_1fr] items-center border-b-2 border-[#2e2e33] bg-[#f0f0f0] text-[12px] leading-[14px]">
          <span className="pl-1.5">Ready</span>
          <span className="flex justify-between">
            <span className="ml-[317px]">416%</span>
            <a href="#" className="pr-0.5 text-[#1f1f8f]">FixedStepDiscrete</a>
          </span>
        </footer>
      </div>
      <div className="flex w-0.5 flex-col bg-white pt-[22px]">
        <div className="h-[23px] bg-[#1976c8]" />
        <div className="mt-[100px] h-6 bg-[#dddddd]" />
      </div>
    </div>
  );
}
